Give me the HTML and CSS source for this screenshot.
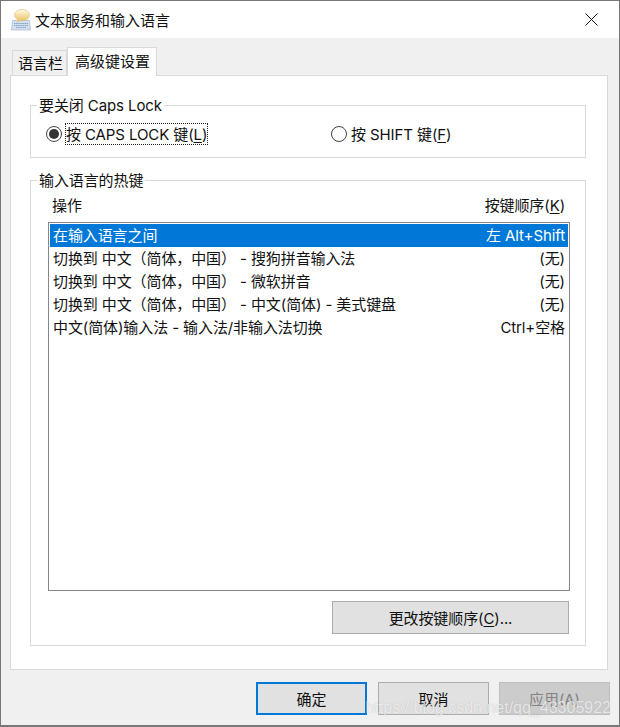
FILE: index.html
```html
<!DOCTYPE html>
<html lang="zh-CN">
<head>
    <meta charset="UTF-8">
    <meta name="viewport" content="width=device-width, initial-scale=1.0">
    <title>文本服务和输入语言</title>
    <link rel="stylesheet" href="styles.css">
</head>
<body>
    <div class="window">
        <!-- Title bar -->
        <div class="titlebar">
            <svg class="app-icon" width="20" height="22" viewBox="0 0 20 22">
                <defs>
                    <linearGradient id="bubble" x1="0" y1="0" x2="0" y2="1">
                        <stop offset="0" stop-color="#fffbe6"/>
                        <stop offset="1" stop-color="#eec56a"/>
                    </linearGradient>
                </defs>
                <path d="M1.5 11.5h17l1 9.5h-19z" fill="#d3e0ef" stroke="#a3b8d0" stroke-width="0.7"/>
                <path d="M3 14.5h14M3 16.5h14M5 18.5h10" stroke="#7f9cc0" stroke-width="1" stroke-dasharray="1.4 0.7"/>
                <ellipse cx="11" cy="6" rx="7.5" ry="5.5" fill="url(#bubble)" stroke="#dcbc70" stroke-width="0.6"/>
                <path d="M7 10.5l-1 3.5 4.5-3z" fill="#eec56a"/>
            </svg>
            <span class="title-text">文本服务和输入语言</span>
            <svg class="close-icon" width="13" height="13" viewBox="0 0 13 13">
                <path d="M0.5 0.5l12 12M12.5 0.5l-12 12" stroke="#111" stroke-width="1" fill="none"/>
            </svg>
        </div>

        <div class="client">
            <!-- Tabs -->
            <div class="tabs">
                <div class="tab">语言栏</div>
                <div class="tab tab-active">高级键设置</div>
            </div>

            <div class="panel">
                <fieldset class="group group-caps">
                    <legend>要关闭 Caps Lock</legend>
                    <div class="radio-row">
                        <div class="radio-item radio-first">
                            <span class="radio radio-on"></span>
                            <span class="radio-label focused">按 CAPS LOCK 键(<u>L</u>)</span>
                        </div>
                        <div class="radio-item">
                            <span class="radio"></span>
                            <span class="radio-label">按 SHIFT 键(<u>F</u>)</span>
                        </div>
                    </div>
                </fieldset>

                <fieldset class="group group-hotkeys">
                    <legend>输入语言的热键</legend>
                    <div class="list-head">
                        <span>操作</span>
                        <span>按键顺序(<u>K</u>)</span>
                    </div>
                    <div class="listbox">
                        <div class="list-row selected"><span>在输入语言之间</span><span>左 Alt+Shift</span></div>
                        <div class="list-row"><span>切换到 中文（简体，中国） - 搜狗拼音输入法</span><span>(无)</span></div>
                        <div class="list-row"><span>切换到 中文（简体，中国） - 微软拼音</span><span>(无)</span></div>
                        <div class="list-row"><span>切换到 中文（简体，中国） - 中文(简体) - 美式键盘</span><span>(无)</span></div>
                        <div class="list-row"><span>中文(简体)输入法 - 输入法/非输入法切换</span><span>Ctrl+空格</span></div>
                    </div>
                    <div class="change-row">
                        <button class="btn btn-change">更改按键顺序(<u>C</u>)...</button>
                    </div>
                </fieldset>
            </div>

            <div class="footer">
                <button class="btn btn-default">确定</button>
                <button class="btn">取消</button>
                <button class="btn btn-disabled">应用(A)</button>
            </div>
        </div>
    </div>
    <!-- Site watermark over the corner -->
    <div class="watermark">https://blog.csdn.net/qq_43305922</div>
</body>
</html>
```

FILE: styles.css
```css
* {
    box-sizing: border-box;
}

html, body {
    margin: 0;
    padding: 0;
}

body {
    width: 620px;
    height: 727px;
    overflow: hidden;
    position: relative;
    font-family: Inter, "Noto Sans CJK SC", sans-serif;
    font-size: 15px;
    letter-spacing: -0.1px;
    color: #111;
}

u {
    text-underline-offset: 2px;
}

.window {
    width: 620px;
    height: 727px;
    border: 1px solid #777;
    border-bottom-width: 2px;
    display: flex;
    flex-direction: column;
}

/* Title bar */
.titlebar {
    height: 37px;
    flex: none;
    background: #fff;
    display: flex;
    align-items: center;
    padding: 0 21px 0 10px;
}

.app-icon {
    margin-right: 4px;
}

.title-text {
    flex: 1;
    height: 20px;
    line-height: 22px;
    letter-spacing: 0;
}

.client {
    flex: 1;
    background: #f0f0f0;
    padding: 9px 11px 0 9px;
    display: flex;
    flex-direction: column;
}

/* Tabs */
.tabs {
    display: flex;
    align-items: flex-end;
    height: 28px;
    padding-left: 2px;
    position: relative;
    z-index: 1;
    flex: none;
}

.tab {
    width: 55px;
    height: 25px;
    border: 1px solid #d9d9d9;
    border-bottom: none;
    font-size: 15px;
    letter-spacing: 0;
    line-height: 26px;
    padding-left: 5px;
    white-space: nowrap;
}

.tab-active {
    width: 90px;
    height: 29px;
    margin-bottom: -1px;
    padding-left: 7px;
    background: #fff;
    line-height: 28px;
}

.panel {
    height: 595px;
    flex: none;
    background: #fff;
    border: 1px solid #d9d9d9;
    padding: 19px 21px 0 19px;
}

/* Group boxes */
.group {
    margin: 0;
    padding: 0;
    border: 1px solid #d9d9d9;
    min-width: 0;
}

.group legend {
    margin-left: 6px;
    padding: 0 2px;
    height: 20px;
    line-height: 22px;
}

.group-caps {
    height: 63px;
    margin-bottom: 12px;
}

.group-hotkeys {
    height: 476px;
    padding: 0 15px 0 17px;
}

.group-hotkeys legend {
    margin-left: -11px;
}

/* Radio buttons */
.radio-row {
    display: flex;
    padding: 8px 0 0 15px;
}

.radio-item {
    display: flex;
    align-items: center;
}

.radio-first {
    width: 285px;
}

.radio {
    width: 16px;
    height: 16px;
    border: 1px solid #444;
    border-radius: 50%;
    background: #fff;
    margin-right: 3px;
    position: relative;
    flex: none;
}

.radio-on::after {
    content: "";
    position: absolute;
    left: 2px;
    top: 2px;
    width: 10px;
    height: 10px;
    border-radius: 50%;
    background: #333;
}

.radio-label {
    height: 22px;
    line-height: 22px;
    border: 1px solid transparent;
    white-space: nowrap;
}

.focused {
    border: 1px dotted #222;
}

/* Hotkey list */
.list-head {
    display: flex;
    justify-content: space-between;
    height: 21px;
    line-height: 22px;
    padding: 0 5px 0 4px;
    margin-top: 5px;
    margin-bottom: 6px;
}

.listbox {
    height: 369px;
    border: 1px solid #828790;
    padding: 1px;
}

.list-row {
    height: 23px;
    line-height: 24px;
    display: flex;
    justify-content: space-between;
    padding: 0 3px;
    white-space: nowrap;
}

.selected {
    background: #0078d7;
    color: #fff;
}

.change-row {
    display: flex;
    justify-content: flex-end;
    padding-top: 10px;
    padding-right: 1px;
}

/* Buttons */
.btn {
    width: 111px;
    height: 33px;
    background: #e1e1e1;
    border: 1px solid #adadad;
    font: inherit;
    letter-spacing: inherit;
    color: #111;
    padding: 2px 0 0;
    line-height: 20px;
}

.btn-change {
    width: 237px;
}

.btn-default {
    border: 2px solid #0078d7;
    margin-right: 1px;
}

.btn-disabled {
    background: #ccc;
    border-color: #bfbfbf;
    color: #838383;
}

.footer {
    display: flex;
    justify-content: flex-end;
    gap: 10px;
    padding-top: 12px;
    margin-right: -2px;
}

.watermark {
    position: absolute;
    right: 9px;
    top: 697px;
    font-family: "Liberation Sans", sans-serif;
    font-size: 16px;
    letter-spacing: 0;
    line-height: 22px;
    color: rgba(255, 255, 255, 0.72);
    text-shadow: 0 0 1px rgba(120, 120, 120, 0.45);
    white-space: nowrap;
}
```
